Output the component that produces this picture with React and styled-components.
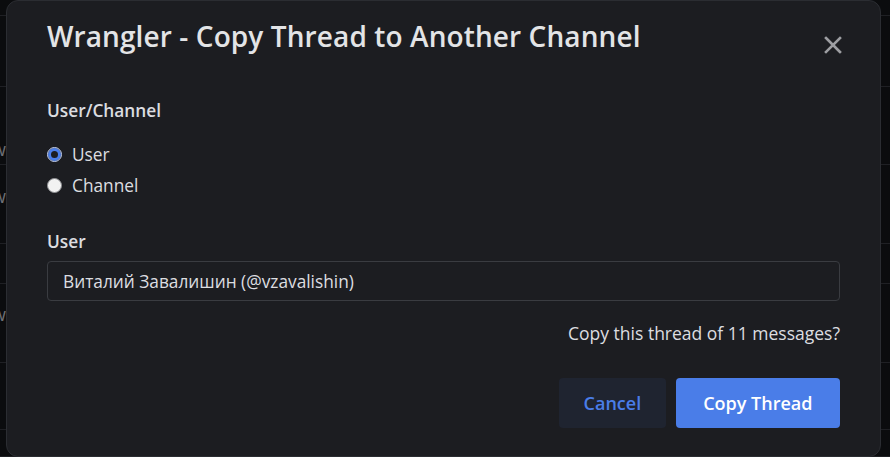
import React, { useState } from "react";
import styled, { createGlobalStyle } from "styled-components";

const GlobalStyle = createGlobalStyle`
  html, body {
    margin: 0;
    padding: 0;
    background: #0b0c0e;
    font-family: "Open Sans", "Liberation Sans", sans-serif;
    overflow: hidden;
  }
  * { box-sizing: border-box; }
`;

const Page = styled.div`
  position: relative;
  width: 890px;
  height: 457px;
  overflow: hidden;
`;

const Feed = styled.div`
  display: flex;
  flex-direction: column;
`;

const FeedRow = styled.div`
  height: ${(p) => p.h}px;
  border-bottom: 1px solid #1f2024;
  display: flex;
  align-items: flex-end;
  padding-bottom: ${(p) => p.pb || 0}px;
  color: #6f7075;
  font-size: 18px;
  margin-left: -8px;
`;

const Modal = styled.div`
  position: absolute;
  top: 0;
  left: 6px;
  width: 875px;
  height: 457px;
  background: #1c1d21;
  border: 1px solid #2b2d32;
  border-radius: 12px;
  padding: 0 40px 0 40px;
  display: flex;
  flex-direction: column;
`;

const Header = styled.div`
  height: 52px;
  display: flex;
  justify-content: space-between;
  align-items: flex-start;
  padding-top: 18px;
`;

const Title = styled.h1`
  margin: 0;
  font-size: 28px;
  line-height: 34px;
  font-weight: 600;
  letter-spacing: 0.1px;
  color: #e3e4e6;
`;

const CloseButton = styled.button`
  margin-top: 16px;
  margin-right: -3px;
  width: 20px;
  height: 20px;
  padding: 0;
  border: 0;
  background: none;
  color: #9d9ea2;
  display: flex;
  align-items: center;
  justify-content: center;
  cursor: pointer;
`;

const Label = styled.div`
  margin-top: ${(p) => p.mt}px;
  font-size: 17.3px;
  line-height: 24px;
  font-weight: 600;
  color: #dcdde0;
`;

const RadioGroup = styled.div`
  margin-top: 17px;
  display: flex;
  flex-direction: column;
  gap: 3px;
`;

const RadioRow = styled.label`
  display: flex;
  align-items: center;
  height: 28px;
  font-size: 17.3px;
  color: #dcdde0;
  cursor: pointer;
`;

const RadioDot = styled.span`
  width: 15px;
  height: 15px;
  border-radius: 50%;
  margin-right: 10px;
  flex-shrink: 0;
  background: ${(p) => (p.checked ? "#1c1d21" : "#f2f2f2")};
  border: 1px solid ${(p) => (p.checked ? "#c9d6f5" : "#8e8f93")};
  box-shadow: ${(p) => (p.checked ? "inset 0 0 0 3px #4a7de8" : "none")};
`;

const Input = styled.div`
  margin-top: 7px;
  height: 40px;
  border: 1px solid #3a3c41;
  border-radius: 4px;
  background: #1c1d21;
  padding: 0 15px;
  display: flex;
  align-items: center;
  font-size: 17.3px;
  color: #dcdde0;
`;

const Message = styled.div`
  margin-top: 20px;
  text-align: right;
  font-size: 17.5px;
  line-height: 24px;
  color: #dcdde0;
`;

const Footer = styled.div`
  margin-top: 33px;
  display: flex;
  justify-content: flex-end;
  gap: 10px;
`;

const Button = styled.button`
  height: 50px;
  padding: 0 ${(p) => (p.primary ? 27.5 : 24.5)}px;
  border: 0;
  border-radius: 4px;
  font-family: inherit;
  font-size: 18px;
  font-weight: 600;
  cursor: pointer;
  background: ${(p) => (p.primary ? "#4a7de8" : "#1f2430")};
  color: ${(p) => (p.primary ? "#ffffff" : "#4a7de8")};
`;

const rows = [
  { h: 16 },
  { h: 71 },
  { h: 78, pb: 3, t: "w" },
  { h: 79, pb: 35, t: "w" },
  { h: 40 },
  { h: 79, pb: 36, t: "w" },
  { h: 67 },
  { h: 27 },
];

export default function App() {
  const [mode, setMode] = useState("user");
  return (
    <Page>
      <GlobalStyle />
      <Feed>
        {rows.map((r, i) => (
          <FeedRow key={i} h={r.h} pb={r.pb}>
            {r.t}
          </FeedRow>
        ))}
      </Feed>
      <Modal>
        <Header>
          <Title>Wrangler - Copy Thread to Another Channel</Title>
          <CloseButton aria-label="Close">
            <svg width="18" height="18" viewBox="0 0 18 18">
              <path d="M2 2 L16 16 M16 2 L2 16" stroke="currentColor" strokeWidth="2.6" strokeLinecap="square" />
            </svg>
          </CloseButton>
        </Header>
        <Label mt={46}>User/Channel</Label>
        <RadioGroup>
          <RadioRow onClick={() => setMode("user")}>
            <RadioDot checked={mode === "user"} />
            User
          </RadioRow>
          <RadioRow onClick={() => setMode("channel")}>
            <RadioDot checked={mode === "channel"} />
            Channel
          </RadioRow>
        </RadioGroup>
        <Label mt={31}>User</Label>
        <Input>Виталий Завалишин (@vzavalishin)</Input>
        <Message>Copy this thread of 11 messages?</Message>
        <Footer>
          <Button>Cancel</Button>
          <Button primary>Copy Thread</Button>
        </Footer>
      </Modal>
    </Page>
  );
}
